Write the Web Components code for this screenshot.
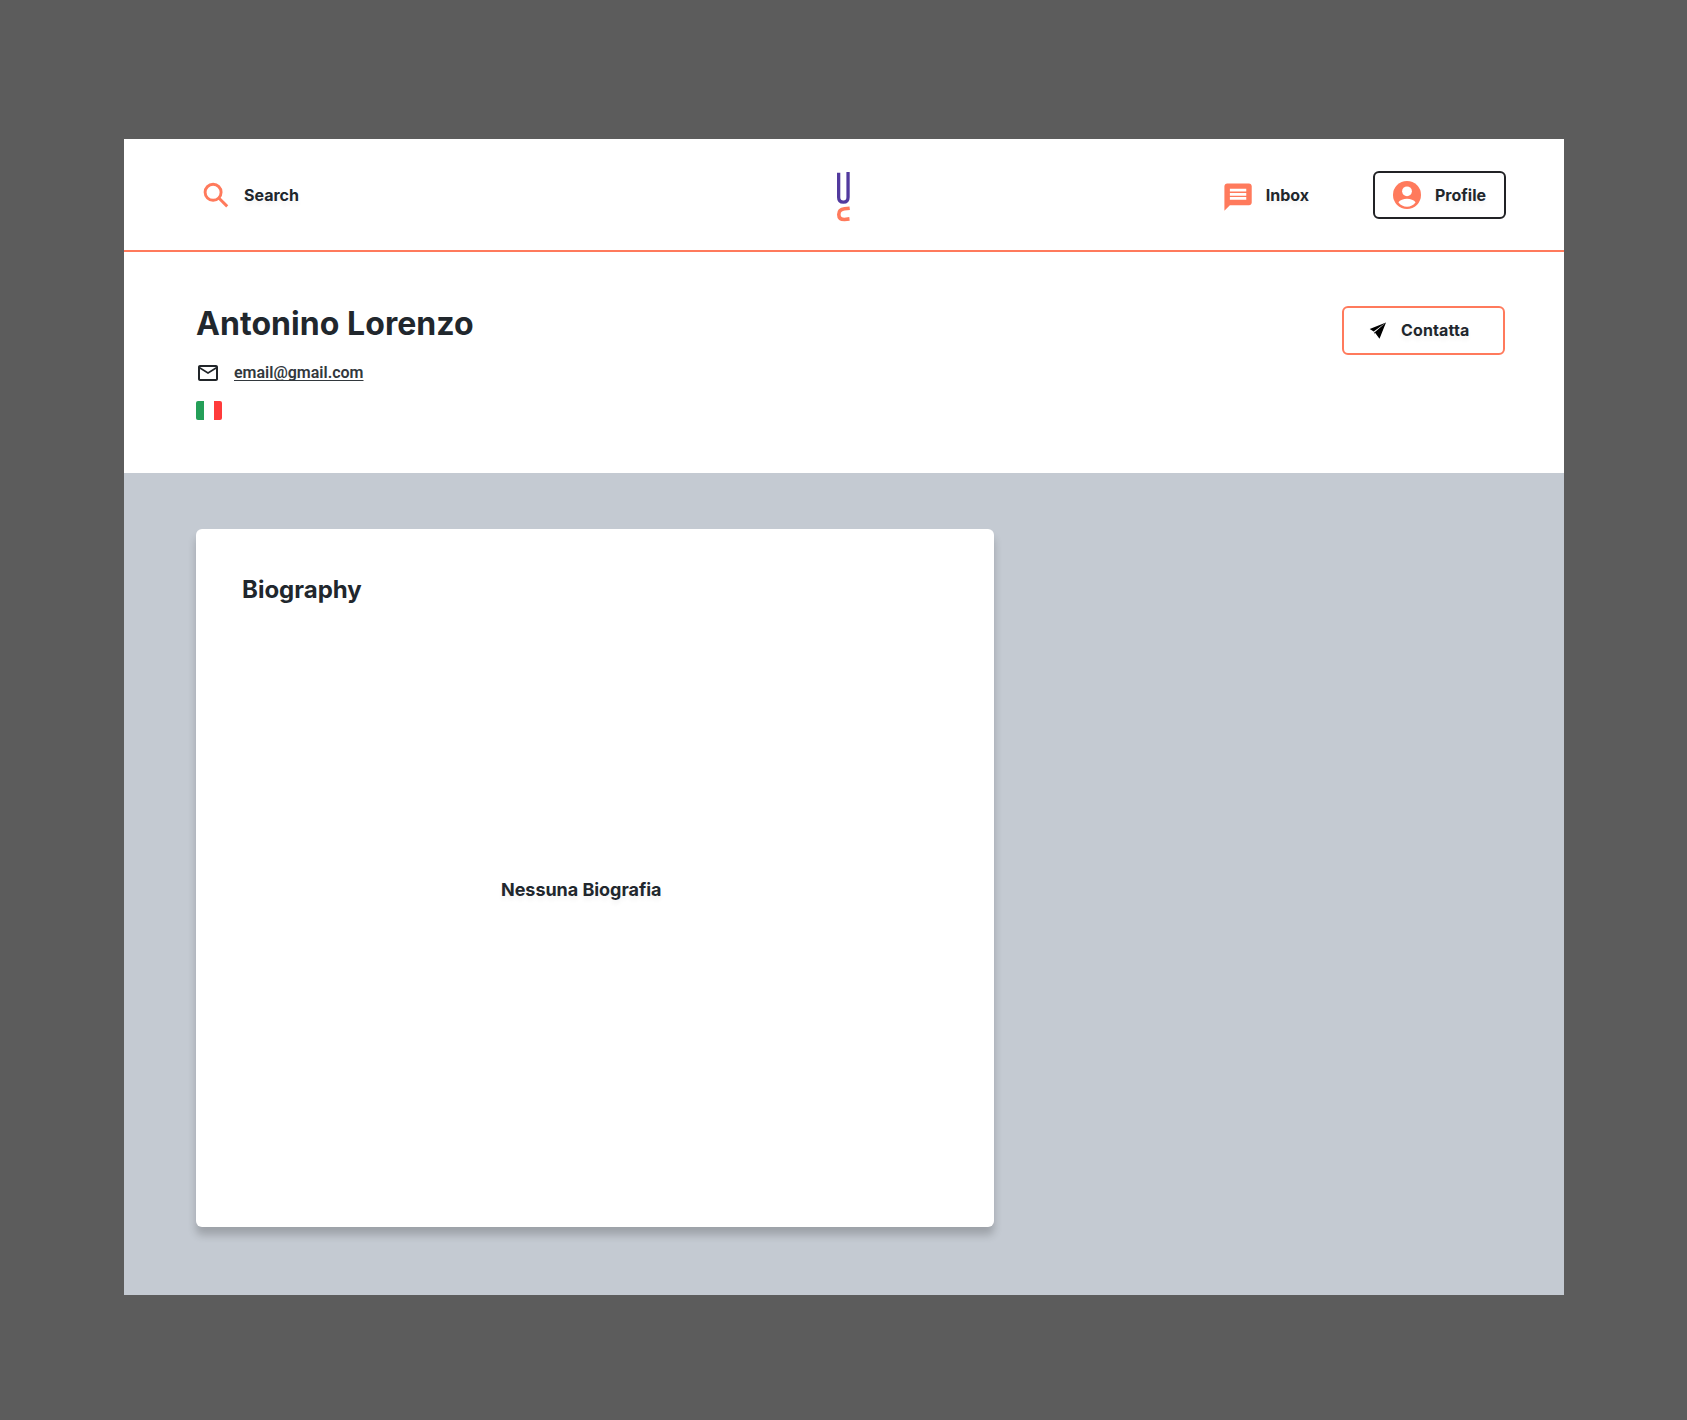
<!DOCTYPE html>
<html lang="it">
<head>
<meta charset="utf-8">
<title>Profile</title>
<style>
html,body{margin:0;height:100%}
body{background:#5c5c5c;font-family:Inter,"Liberation Sans",sans-serif;color:#21272d;min-height:1420px}
</style>
</head>
<body>
<profile-page></profile-page>
<script>
const define = (name, html) => customElements.define(name, class extends HTMLElement {
  constructor() {
    super();
    const t = document.createElement('template');
    t.innerHTML = html;
    this.attachShadow({mode: 'open'}).append(t.content.cloneNode(true));
  }
});

define('icon-search', `<style>:host{display:block;width:32px;height:32px}svg{display:block}</style>
<svg width="32" height="32" viewBox="0 0 32 32" fill="none" stroke="#ff7a5c" stroke-width="2.900"><circle cx="13.100" cy="12.300" r="8"/><path d="M18.800 18l8.400 8.400"/></svg>`);

define('icon-chat', `<style>:host{display:block;width:28px;height:28px}svg{display:block}</style>
<svg width="28" height="28" viewBox="1.700 1.700 20.500 20.500"><path fill="#ff7a5c" d="M20 2H4c-1.100 0-2 .9-2 2v18l4-4h14c1.100 0 2-.9 2-2V4c0-1.100-.9-2-2-2zM18 14H6v-2h12v2zm0-3H6V9h12v2zm0-3H6V6h12v2z"/></svg>`);

define('icon-account', `<style>:host{display:block;width:28px;height:28px}svg{display:block}</style>
<svg width="28" height="28" viewBox="0 0 28 28"><circle cx="14" cy="14" r="14" fill="#ff7a5c"/><circle cx="14" cy="10.3" r="4.9" fill="#fff"/><path fill="#fff" d="M5.4 21.2c1.5-2.2 5.2-3.4 8.6-3.4s7.1 1.2 8.6 3.4a10.4 10.4 0 0 1-17.2 0z"/></svg>`);

define('icon-mail', `<style>:host{display:block;width:24px;height:24px}svg{display:block}</style>
<svg width="24" height="24" viewBox="0 0 24 24"><path fill="#212529" d="M22 6c0-1.1-.9-2-2-2H4c-1.100 0-2 .9-2 2v12c0 1.100.9 2 2 2h16c1.100 0 2-.9 2-2V6zm-2 0l-8 5-8-5h16zm0 12H4V8l8 5 8-5v10z"/></svg>`);

define('icon-plane', `<style>:host{display:block;width:18px;height:18px}svg{display:block}</style>
<svg width="18" height="18" viewBox="0 -.6 18 18"><path d="M17 .8L.7 7.500l4 2.300zM17 .8L5.700 10.700 10.500 17.100z"/><path d="M4.700 9.800l1 .9 .1 2.200z"/></svg>`);

define('italy-flag', `<style>:host{display:flex;width:26px;height:19px;border-radius:2px;overflow:hidden}i{flex:1;background:#fff}i:first-of-type{flex:none;width:8px;background:#249f58}i:last-of-type{flex:none;width:8.500px;background:#ff3b3b}</style><i></i><i></i><i></i>`);

define('brand-logo', `<style>:host{display:block;width:16px;height:52px}svg{display:block}</style>
<svg width="16" height="52" viewBox="0 0 16 52" fill="none"><path stroke="#523a9e" stroke-width="3.300" d="M2.650 1.800V26.200Q2.650 31.100 7.400 31.100Q12.050 31.100 12.050 26.200V1"/><path stroke="#ff7a5c" stroke-width="3.600" d="M13.700 37.200L8.500 37.800Q2.800 38.500 2.800 43.400Q2.800 48.500 8.500 48.500L13.500 47.900"/></svg>`);

define('nav-item', `<style>
:host{display:flex;align-items:center;box-sizing:border-box;font-weight:700;font-size:16px;line-height:20px}
:host([boxed]){border:2px solid #212225;border-radius:6px;height:48.500px}
:host([accent]){border-color:#ff7a5c;height:49px;padding-bottom:1px;letter-spacing:.14px}
.label{text-shadow:0 4px 4px rgba(0,0,0,.05);white-space:nowrap}
</style><slot name="icon"></slot><span class="label"><slot></slot></span>`);

define('page-header', `<style>
:host{display:flex;align-items:flex-start;box-sizing:border-box;height:113px;border-bottom:2px solid #ff7a5c;padding:32px 58px 0 76px}
.side{flex:1;display:flex;height:48px;align-items:center}
.right{justify-content:flex-end}
.search{gap:12px}
icon-search{margin-top:2px}
.inbox{gap:14px;margin-right:64px}
icon-chat{margin-top:3px}
.profile{width:133px;gap:14px;padding-left:18px}
.mid{margin-left:-18px}
</style>
<div class="side"><nav-item class="search"><icon-search slot="icon"></icon-search>Search</nav-item></div>
<brand-logo class="mid"></brand-logo>
<div class="side right">
<nav-item class="inbox"><icon-chat slot="icon"></icon-chat>Inbox</nav-item>
<nav-item class="profile" boxed><icon-account slot="icon"></icon-account>Profile</nav-item></div>`);

define('profile-summary', `<style>
:host{display:flex;justify-content:space-between;align-items:flex-start;box-sizing:border-box;height:221px;padding:54px 59px 0 72px}
h1{margin:0;font-size:32px;line-height:36px;font-weight:700;letter-spacing:.06px}
.mail{display:flex;align-items:center;gap:14px;margin-top:19px;height:24px}
a{font:600 16px/20px Roboto,sans-serif;color:#32383d;text-decoration:underline;text-decoration-thickness:1px;text-underline-offset:2px;text-decoration-skip-ink:none}
italy-flag{margin-top:16px}
.contact{width:163px;padding-left:25px;gap:14px}
</style>
<div><h1>Antonino Lorenzo</h1><div class="mail"><icon-mail></icon-mail><a>email@gmail.com</a></div><italy-flag></italy-flag></div>
<nav-item class="contact" boxed accent><icon-plane slot="icon"></icon-plane>Contatta</nav-item>`);

define('bio-card', `<style>
:host{display:flex;flex-direction:column;box-sizing:border-box;width:798px;height:698px;background:#fff;border-radius:6px;box-shadow:0 8px 8px rgba(0,0,0,.2);padding:46px}
h2{margin:0;font-size:24px;line-height:30px;font-weight:700}
p{margin:271px 0 0 259px;font-size:18px;line-height:28px;font-weight:700;letter-spacing:-.04px;text-shadow:0 4px 4px rgba(0,0,0,.05)}
</style><h2><slot name="title"></slot></h2><p><slot></slot></p>`);

define('profile-page', `<style>
:host{display:flex;padding:139px 0 0 124px}
.frame{width:1440px;height:1156px;background:#fff;display:flex;flex-direction:column}
page-header,profile-summary{flex:none}
main{flex:1;background:#c4cad2;padding:56px 72px 0}
</style>
<div class="frame"><page-header></page-header><profile-summary></profile-summary>
<main><bio-card><span slot="title">Biography</span>Nessuna Biografia</bio-card></main></div>`);
</script>
</body>
</html>
